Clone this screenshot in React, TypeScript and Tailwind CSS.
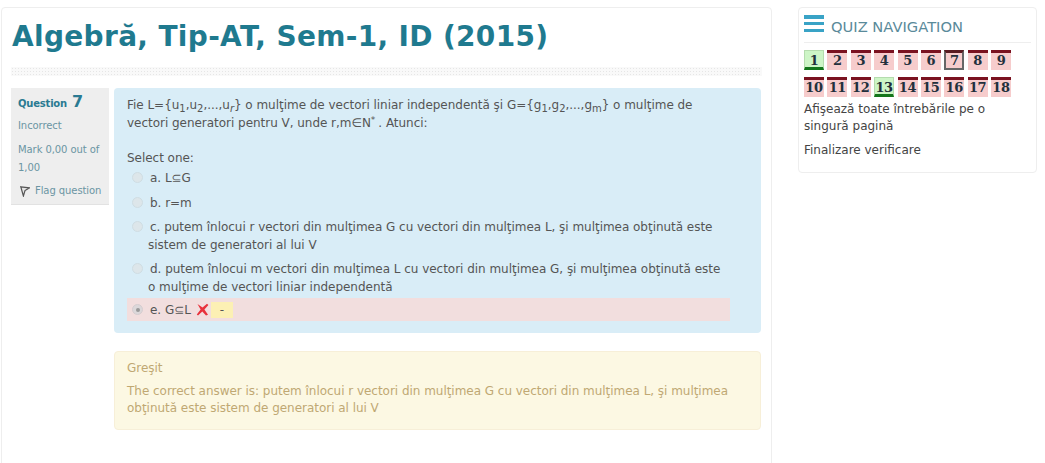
import type { ReactNode } from "react";

const row1 = [1, 2, 3, 4, 5, 6, 7, 8, 9];
const row2 = [10, 11, 12, 13, 14, 15, 16, 17, 18];

function Sub(props: { children: ReactNode; italic?: boolean }) {
	return (
		<span className={`align-[-3px] text-[10px] leading-none ${props.italic ? "italic" : ""}`}>
			{props.children}
		</span>
	);
}

function Radio(props: { checked?: boolean }) {
	const color = props.checked ? "border-[#d6cdd0] bg-[#dcd8da]" : "border-[#cfdde3] bg-[#dde6ea]";
	return (
		<span className={`mr-[7px] inline-flex h-[11px] w-[11px] shrink-0 items-center justify-center rounded-full border align-[-1px] ${color}`}>
			{props.checked && <span className="h-[4px] w-[4px] rounded-full bg-[#999]" />}
		</span>
	);
}

function NavButton(props: { n: number }) {
	const { n } = props;
	const correct = n === 1 || n === 13;
	const current = n === 7;
	let border = "border-t-[3px] border-[#7a1220] leading-[15px] bg-[#f6cccc]";
	if (correct) border = "border border-b-[3px] border-[#b5dcae] border-b-[#14761c] leading-[19px] bg-[#cdf5c6]";
	if (current) border = "border-x-2 border-b-2 border-t-[3px] border-x-[#666] border-b-[#666] border-t-[#5a1a20] leading-[15px] bg-[#f6cccc]";
	return (
		<div
			className={`flex h-[20px] w-[20px] items-start justify-center font-['DejaVu_Serif',serif] text-[13px] font-bold tracking-[-0.3px] text-[#22303c] ${border}`}
		>
			{n}
		</div>
	);
}

function Question() {
	return (
		<div className="flex gap-[5px]">
			<div className="h-[117px] w-[98px] shrink-0 border-b border-[#e2e2e2] bg-[#eeeeee] px-[7px] pt-[6px] text-[10px] leading-[18px] tracking-[-0.08px] text-[#6b95a3]">
				<div className="flex items-baseline font-bold leading-[20px] tracking-[-0.2px] text-[#2a7a92]">
					Question
					<span className="ml-[5px] text-[16px] leading-none">7</span>
				</div>
				<div className="mt-[3px]">Incorrect</div>
				<div className="mt-[6px]">Mark 0,00 out of 1,00</div>
				<div className="mt-[5px] flex items-center gap-[5px] pl-[2px]">
					<svg width="10" height="11" viewBox="0 0 10 11" fill="#e4e4e4" stroke="#555" strokeWidth="1.2">
						<path d="M.8 .8 L9.4 1.8 L5 4.6 L3.4 10 Z" />
					</svg>
					Flag question
				</div>
			</div>
			<div className="h-[245px] w-[647px] rounded-[4px] bg-[#d9edf7] px-[13px] pt-[8px] text-[12px] leading-[18px] tracking-[-0.03px] text-[#555]">
				<div className="w-[600px]">
					Fie L={"{"}u<Sub>1</Sub>,u<Sub>2</Sub>,...,u<Sub italic>r</Sub>{"}"} o mulţime de vectori liniar independentă şi G={"{"}g<Sub>1</Sub>,g<Sub>2</Sub>,...,g<Sub>m</Sub>{"}"} o mulţime de vectori generatori pentru V, unde r,m∈N<sup className="mr-[3px] text-[9px]">*</sup>. Atunci:
				</div>
				<div className="mt-[17px]">Select one:</div>
				<div className="pl-[5px]">
					<div className="h-[25px] pt-[2px]">
						<Radio />a. L⊆G
					</div>
					<div className="h-[23px] pt-[2px]">
						<Radio />b. r=m
					</div>
					<div className="mt-[3px] h-[41px] w-[595px] pl-[16px] -indent-[16px]">
						<Radio />c. putem înlocui r vectori din mulţimea G cu vectori din mulţimea L, şi mulţimea obţinută este sistem de generatori al lui V
					</div>
					<div className="mt-[1px] h-[38px] w-[595px] pl-[16px] -indent-[16px]">
						<Radio />d. putem înlocui m vectori din mulţimea L cu vectori din mulţimea G, şi mulţimea obţinută este o mulţime de vectori liniar independentă
					</div>
				</div>
				<div className="flex h-[23px] w-[603px] items-center bg-[#f2dede] pl-[5px]">
					<Radio checked />e. G⊆L
					<svg className="ml-[5px]" width="13" height="13" viewBox="0 0 13 13">
						<path d="M1.5 1 L6.5 4.5 L11 .8 L12.4 2 L8.4 6.6 L12 11.8 L10 12.6 L6.3 8.6 L2 12.6 L.8 11.4 L4.6 6.5 Z" fill="#e8323c" />
					</svg>
					<span className="ml-[2px] flex h-[16px] w-[22px] items-center justify-center bg-[#fcf0b4]">-</span>
				</div>
			</div>
		</div>
	);
}

export default function App() {
	return (
		<div className="flex h-[463px] items-start overflow-hidden bg-white pl-[1px] pt-[7px] font-['DejaVu_Sans',sans-serif]">
			<main className="h-[470px] w-[771px] shrink-0 rounded-[4px] border border-[#eeeeee] px-[9px]">
				<h1 className="ml-[1px] mt-[11px] text-[28px] font-bold leading-[36px] tracking-[0.33px] text-[#1f7a8f]">
					Algebră, Tip-AT, Sem-1, ID (2015)
				</h1>
				<div className="mb-[12px] mt-[12px] h-[9px] bg-[#f9f9f9] bg-[radial-gradient(#e6e6e6_1px,transparent_1px)] bg-[length:3px_3px]" />
				<Question />
				<div className="ml-[103px] mt-[18px] h-[79px] w-[647px] rounded-[4px] border border-[#f7efd8] bg-[#fcf8e3] px-[12px] pt-[8px] text-[12px] leading-[17px] tracking-[-0.03px] text-[#c0a873]">
					<div>Greşit</div>
					<div className="mt-[6px] w-[620px]">
						The correct answer is: putem înlocui r vectori din mulţimea G cu vectori din mulţimea L, şi mulţimea obţinută este sistem de generatori al lui V
					</div>
				</div>
			</main>
			<aside className="ml-[26px] h-[166px] w-[239px] shrink-0 rounded-[4px] border border-[#eeeeee] px-[5px] pt-[7px]">
				<div className="flex h-[28px] items-start gap-[7px] border-b border-[#eeeeee] text-[14.7px] leading-[24px] text-[#5a8a9a]">
					<div className="flex h-[17px] w-[20px] flex-col justify-between">
						<div className="h-[3.5px] bg-[#39a3c6]" />
						<div className="h-[3.5px] bg-[#39a3c6]" />
						<div className="h-[3.5px] bg-[#39a3c6]" />
					</div>
					QUIZ NAVIGATION
				</div>
				<div className="mt-[7px] flex w-[207px] justify-between">
					{row1.map((n) => (
						<NavButton key={n} n={n} />
					))}
				</div>
				<div className="mt-[7px] flex w-[207px] justify-between">
					{row2.map((n) => (
						<NavButton key={n} n={n} />
					))}
				</div>
				<div className="mt-[4px] w-[200px] text-[12px] leading-[17px] text-[#444]">
					Afişează toate întrebările pe o singură pagină
				</div>
				<div className="mt-[7px] text-[12px] leading-[17px] text-[#444]">Finalizare verificare</div>
			</aside>
		</div>
	);
}
